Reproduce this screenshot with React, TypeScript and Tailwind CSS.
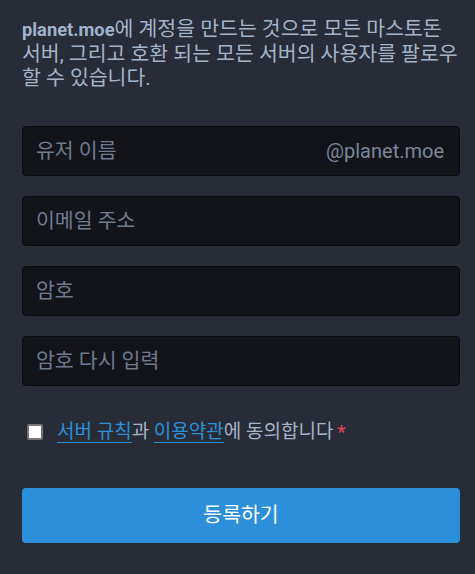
import React from "react";

const font = { fontFamily: 'Roboto, "Noto Sans CJK KR", sans-serif' };

function Field({ placeholder, suffix }: { placeholder: string; suffix?: string }) {
  return (
    <div className="flex items-center h-[50px] rounded-[4px] border border-[#0b0c10] bg-[#131419] pl-[13px] pr-[15px]">
      <span className="flex-1 text-[20.5px] text-[#707b8f]">{placeholder}</span>
      {suffix && <span className="text-[20px] text-[#7b879a]">{suffix}</span>}
    </div>
  );
}

export default function App() {
  return (
    <div className="min-h-[574px] bg-[#282c37] pl-[22px] pr-[15px] pt-[17px]" style={font}>
      <p className="text-[20.5px] leading-[24px] text-[#a3b3c8]">
        <strong className="font-bold text-[18.3px] text-[#a0b3cc]">planet.moe</strong>
        <span>에 계정을 만드는 것으로 모든 마스토돈 서버, 그리고 호환 되는 모든 서버의 사용자를 팔로우 할 수 있습니다.</span>
      </p>
      <div className="mt-[36px] flex flex-col gap-[20px]">
        <Field placeholder="유저 이름" suffix="@planet.moe" />
        <Field placeholder="이메일 주소" />
        <Field placeholder="암호" />
        <Field placeholder="암호 다시 입력" />
      </div>
      <div className="mt-[34px] flex items-center pl-[5px] h-[24px]">
        <span className="w-[16px] h-[16px] rounded-[2px] bg-white border-2 border-[#767676]" />
        <span className="ml-[14px] text-[19px] leading-[24px] text-[#a3b3c8]">
          <span className="text-[#2b90d9] underline underline-offset-[4px]">서버 규칙</span>과{" "}
          <span className="text-[#2b90d9] underline underline-offset-[4px]">이용약관</span>에 동의합니다
          <span className="text-[#df405a] ml-[4px] text-[18px] font-bold">*</span>
        </span>
      </div>
      <button className="mt-[44px] w-full h-[55px] rounded-[4px] bg-[#2b90d9] text-white text-[20.5px]">
        등록하기
      </button>
    </div>
  );
}
